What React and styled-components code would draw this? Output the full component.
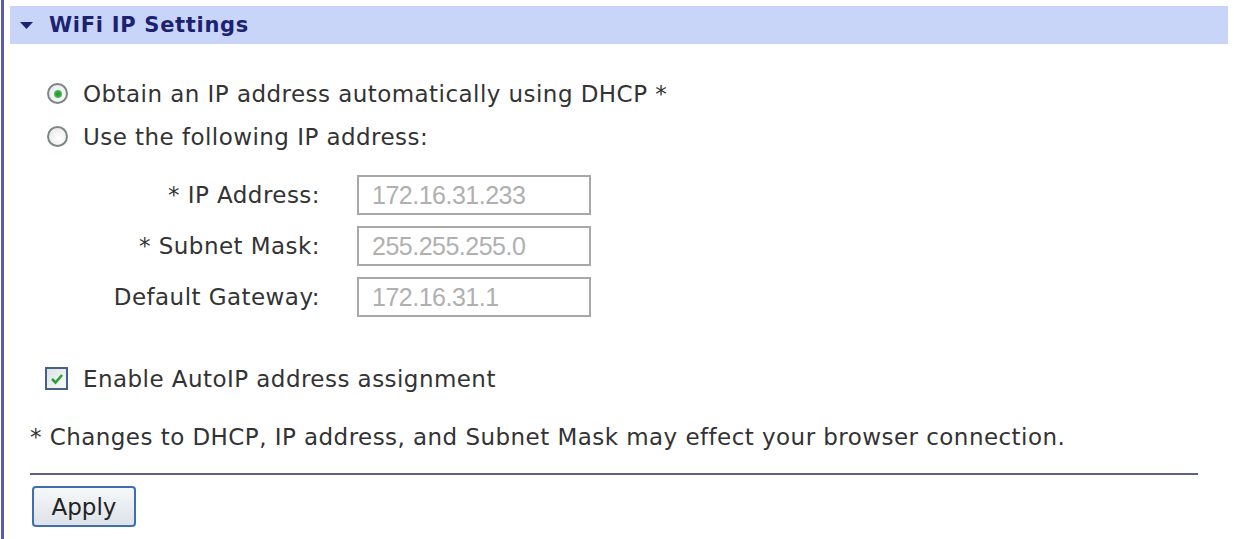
import React from "react";
import styled, { createGlobalStyle } from "styled-components";

const Global = createGlobalStyle`
  html, body { margin: 0; padding: 0; background: #fff; }
  body { font-family: "DejaVu Sans", Verdana, sans-serif; color: #333; }
`;

const Page = styled.div`
  height: 539px;
  box-sizing: border-box;
  margin-left: 1px;
  border-left: 3px solid #5b5ba6;
  padding: 6px 6px 0 6px;
  display: flex;
  flex-direction: column;
`;

const Header = styled.div`
  height: 38px;
  background: #c8d5f8;
  display: flex;
  align-items: center;
  padding-left: 10px;
  gap: 16px;
  font-weight: bold;
  font-size: 21px;
  letter-spacing: 0.7px;
  color: #1d2270;
`;

const Body = styled.div`
  display: flex;
  flex-direction: column;
  padding-left: 20px;
  padding-top: 28px;
`;

const OptionRow = styled.label`
  display: flex;
  align-items: center;
  gap: ${p => p.$gap || 15}px;
  height: 43px;
  font-size: 23px;
  letter-spacing: 0.45px;
  margin-left: ${p => p.$indent || 17}px;
  margin-top: ${p => p.$top || 0}px;
`;

const Radio = styled.span`
  width: 21px;
  height: 21px;
  border-radius: 50%;
  border: 2.5px solid #7b8784;
  box-sizing: border-box;
  background: radial-gradient(circle at 60% 60%, #fff 0%, #e2e6e6 100%);
  display: flex;
  align-items: center;
  justify-content: center;
  &::after {
    content: "";
    width: 8px;
    height: 8px;
    border-radius: 50%;
    background: ${p => (p.$checked ? "radial-gradient(circle, #25a035 30%, #86cf8c 100%)" : "transparent")};
  }
`;

const Check = styled.span`
  width: 23px;
  height: 23px;
  border: 2px solid #45608a;
  box-sizing: border-box;
  background: linear-gradient(135deg, #dbe4e4, #f7fbf7);
  display: flex;
  align-items: center;
  justify-content: center;
`;

const Fields = styled.div`
  display: grid;
  grid-template-columns: 290px 234px;
  column-gap: 37px;
  row-gap: 11px;
  align-items: center;
  margin-top: 17px;
`;

const FieldLabel = styled.span`
  text-align: right;
  font-size: 23px;
  letter-spacing: 0.45px;
`;

const Input = styled.div`
  height: 40px;
  box-sizing: border-box;
  border: 2px solid #a8a8a8;
  display: flex;
  align-items: center;
  padding-left: 13px;
  font-family: "Liberation Sans", Arial, sans-serif;
  font-size: 25px;
  letter-spacing: -0.5px;
  color: #b0b0b0;
`;

const Note = styled.div`
  font-size: 23px;
  letter-spacing: 0.45px;
  line-height: 28px;
  margin-top: 23px;
`;

const Rule = styled.hr`
  border: none;
  height: 2px;
  background: #5e5f8f;
  margin: 22px 0 0 0;
  width: 1168px;
`;

const Button = styled.button`
  margin-top: 11px;
  margin-left: 2px;
  align-self: flex-start;
  width: 104px;
  height: 41px;
  box-sizing: border-box;
  border: 2px solid #3f6fb0;
  border-radius: 4px;
  background: linear-gradient(#f6f8fa, #dde2e8);
  font-family: "DejaVu Sans", Verdana, sans-serif;
  font-size: 23px;
  color: #222;
  padding: 0;
`;

const Triangle = () => (
  <svg width="13" height="7" viewBox="0 0 13 7">
    <polygon points="0,0 13,0 6.5,7" fill="#1d2270" />
  </svg>
);

const fields = [
  ["* IP Address:", "172.16.31.233"],
  ["* Subnet Mask:", "255.255.255.0"],
  ["Default Gateway:", "172.16.31.1"],
];

export default function App() {
  return (
    <>
      <Global />
      <Page>
        <Header>
          <Triangle />
          <span>WiFi IP Settings</span>
        </Header>
        <Body>
          <OptionRow>
            <Radio $checked />
            Obtain an IP address automatically using DHCP *
          </OptionRow>
          <OptionRow>
            <Radio />
            Use the following IP address:
          </OptionRow>
          <Fields>
            {fields.map(([l, v]) => (
              <React.Fragment key={l}>
                <FieldLabel>{l}</FieldLabel>
                <Input>{v}</Input>
              </React.Fragment>
            ))}
          </Fields>
          <OptionRow $top={40} $indent={15} $gap={15}>
            <Check>
              <svg width="14" height="12" viewBox="0 0 14 12">
                <path d="M2 6 L5.5 9.5 L12 2" stroke="#2f9e3a" strokeWidth="2.6" fill="none" />
              </svg>
            </Check>
            Enable AutoIP address assignment
          </OptionRow>
          <Note>* Changes to DHCP, IP address, and Subnet Mask may effect your browser connection.</Note>
          <Rule />
          <Button>Apply</Button>
        </Body>
      </Page>
    </>
  );
}
